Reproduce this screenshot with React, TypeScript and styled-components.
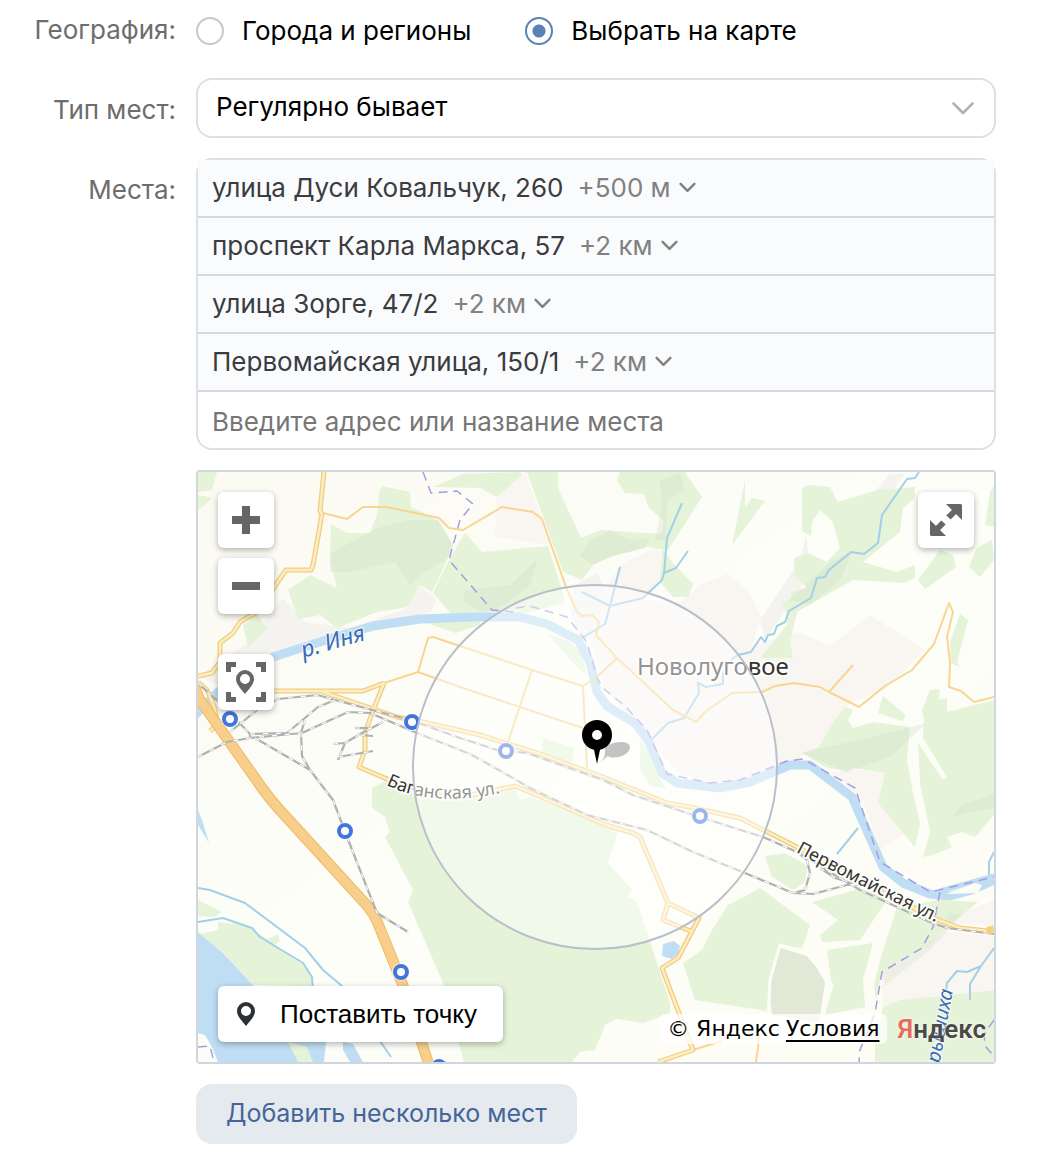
import React, { useId, useState } from "react";
import styled, { createGlobalStyle, css } from "styled-components";

const UI_FONT = 'Inter, "Liberation Sans", Arial, sans-serif';
const MAP_FONT = '"Noto Sans", "Open Sans", sans-serif';
const BORDER = "#dce1e6";

const GlobalStyle = createGlobalStyle`
  *, *::before, *::after { box-sizing: border-box; }
  body {
    margin: 0;
    background: #fff;
    color: #000;
    font-family: ${UI_FONT};
    font-size: 26px;
    line-height: 32px;
  }
`;

const Form = styled.form`
  display: grid;
  grid-template-columns: 176px minmax(0, 1fr);
  column-gap: 20px;
  padding: 0 50px 12px 0;
`;

const labelStyle = css`
  color: #6d6d6d;
  text-align: right;
`;

const RowLabel = styled.label`
  ${labelStyle}
  padding-top: ${(p: { $top?: number }) => p.$top ?? 16}px;
`;

const RowCaption = styled.span`
  ${labelStyle}
  padding-top: ${(p: { $top?: number }) => p.$top ?? 16}px;
`;

const Control = styled.div`
  min-width: 0;
  margin-bottom: 20px;
`;

const RadioGroup = styled.div`
  display: flex;
  flex-wrap: wrap;
  gap: 0 54px;
  padding: 15px 0 11px;
`;

const RadioLabel = styled.label`
  display: flex;
  align-items: center;
  gap: 18px;
  cursor: pointer;
`;

const Radio = styled.input`
  appearance: none;
  width: 28px;
  height: 28px;
  margin: 0;
  border: 2px solid #c5cad0;
  border-radius: 50%;
  background: #fff;
  cursor: pointer;

  &:checked {
    border-color: #5b82b5;
    background: radial-gradient(circle, #5b82b5 0 6px, #fff 7px);
  }
`;

const SelectBox = styled.div`
  display: grid;
  align-items: center;
  border: 2px solid ${BORDER};
  border-radius: 16px;
  background: #fff;

  > * { grid-area: 1 / 1; }
  > svg {
    justify-self: end;
    margin-right: 20px;
    pointer-events: none;
  }
`;

const Select = styled.select`
  appearance: none;
  width: 100%;
  height: 56px;
  padding: 0 56px 2px 18px;
  border: 0;
  border-radius: 14px;
  background: transparent;
  color: #000;
  font: inherit;
`;

const Places = styled.div`
  border: 2px solid ${BORDER};
  border-radius: 16px;
`;

const PlaceList = styled.ul`
  margin: 0;
  padding: 0;
  list-style: none;
`;

const Place = styled.li`
  display: flex;
  align-items: center;
  gap: 14px;
  height: 58px;
  padding: 0 14px;
  border-bottom: 2px solid #d3d9de;
  background: #fafbfd;
  color: #3a3c40;
`;

const RadiusButton = styled.button`
  display: flex;
  align-items: center;
  gap: 8px;
  padding: 0;
  border: 0;
  background: none;
  color: #818181;
  font: inherit;
  cursor: pointer;
`;

const PlaceInput = styled.input`
  display: block;
  width: 100%;
  height: 56px;
  padding: 2px 14px 0;
  border: 0;
  border-radius: 14px;
  background: transparent;
  color: #000;
  font: inherit;

  &::placeholder { color: #767676; opacity: 1; }
`;

const MapFrame = styled.div`
  position: relative;
  height: 594px;
  border: 2px solid #cfd6de;
  border-radius: 4px;
  overflow: hidden;
  background: #fcfcf6;
`;

const MapCanvas = styled.svg`
  display: block;
  width: 100%;
  height: 100%;
`;

const MapTools = styled.div<{ $side: "left" | "right" }>`
  position: absolute;
  top: 20px;
  ${(p) => p.$side}: 20px;
  display: flex;
  flex-direction: column;
  gap: 10px;
`;

const floating = css`
  border: 0;
  border-radius: 6px;
  background: #fff;
  box-shadow: 0 2px 6px rgba(0, 0, 0, 0.3);
  cursor: pointer;
`;

const MapButton = styled.button<{ $apart?: boolean }>`
  ${floating}
  display: grid;
  place-items: center;
  width: 56px;
  height: 56px;
  margin-top: ${(p) => (p.$apart ? 30 : 0)}px;
  padding: 0;
`;

const PointButton = styled.button`
  ${floating}
  position: absolute;
  left: 20px;
  bottom: 20px;
  display: flex;
  align-items: center;
  gap: 24px;
  height: 56px;
  padding: 0 26px 0 18px;
  color: #000;
  font: 26px/32px "Liberation Sans", Arial, sans-serif;
`;

const MapCredits = styled.div`
  position: absolute;
  right: 8px;
  bottom: 18px;
  display: flex;
  align-items: center;
  gap: 10px;
`;

const Copyright = styled.div`
  display: flex;
  gap: 6px;
  padding: 0 8px;
  border-radius: 6px;
  background: rgba(255, 255, 255, 0.75);
  font: 22px/30px "DejaVu Sans", Verdana, sans-serif;

  a {
    color: #000;
    text-underline-offset: 4px;
    text-decoration-thickness: 2px;
  }
`;

const Logo = styled.a`
  color: #4b4b45;
  font: 600 26px/30px Roboto, sans-serif;
  text-decoration: none;
  text-shadow: 0 0 2px #fff, 0 0 2px #fff;

  span { color: #ea6a5c; }
`;

const AddButton = styled.button`
  height: 60px;
  padding: 0 30px 2px;
  border: 0;
  border-radius: 16px;
  background: #e5eaef;
  color: #45659a;
  font: inherit;
  font-size: 25px;
  cursor: pointer;
`;

const MapLabel = styled.text<{ $water?: boolean; $size: number }>`
  font-family: ${MAP_FONT};
  font-size: ${(p) => p.$size}px;
  font-style: ${(p) => (p.$water ? "italic" : "normal")};
  fill: ${(p) => (p.$water ? "#3a6cb5" : "#333")};
  stroke: rgba(255, 255, 255, 0.85);
  stroke-width: ${(p) => (p.$water ? 2 : 4)}px;
  stroke-linejoin: round;
  paint-order: stroke;
`;

const Chevron = ({ size }: { size: "small" | "large" }) =>
  size === "large" ? (
    <svg width="22" height="14" viewBox="0 0 22 14" fill="none" stroke="#aeb1b5" strokeWidth="2.6" strokeLinecap="round" strokeLinejoin="round" aria-hidden="true">
      <path d="M1.500 2.500 11 12 20.500 2.500" />
    </svg>
  ) : (
    <svg width="17" height="12" viewBox="0 0 17 12" fill="none" stroke="#818181" strokeWidth="2.4" strokeLinecap="round" strokeLinejoin="round" aria-hidden="true">
      <path d="M1.6 1.8 8.5 8.8 15.4 1.8" />
    </svg>
  );

const PinShape = ({ x = 0, y = 0, color }: { x?: number; y?: number; color: string }) => (
  <path
    transform={`translate(${x} ${y})`}
    fill={color}
    fillRule="evenodd"
    d="M9 0a9 9 0 0 1 9 9c0 5-4.500 9.500-9 15C4.500 18.500 0 14 0 9a9 9 0 0 1 9-9Zm0 4a5 5 0 1 0 0 10A5 5 0 0 0 9 4Z"
  />
);

const forests = [
  "198,472 217,472 212,490 198,492",
  "198,495 213,498 198,510",
  "257,615 268,628 248,647 243,625",
  "331,524 347,533 370,533 377,515 379,493 382,486 410,492 411,507 438,520 453,545 448,558 432,592 420,585 408,607 377,612 337,628 320,615 298,619 288,590 310,575 337,588 330,562",
  "465,533 482,552 548,546 563,593 564,603 527,613 493,612 450,613 433,593 448,562",
  "424,622 480,620 480,625 455,633",
  "548,634 570,642 582,655 587,676 572,662",
  "527,472 558,472 558,488 581,538 600,530 660,534 663,530 663,520 648,507 644,494 625,493 617,480 620,472 685,472 690,480 702,497 668,550 647,547 610,557 593,565 582,580 563,572",
  "662,548 673,563 693,584 688,597 673,597 660,582",
  "433,487 463,474 520,472 522,475 497,497 480,488",
  "802,488 808,485 830,487 838,502 877,490 915,487 915,498 903,508 900,532 863,562 897,572 915,565 915,578 903,583 853,580 797,612 790,642 793,658 760,658 787,625 785,608 782,604 791,598 791,592 808,588 795,577 794,558 808,553 827,562 840,548 833,522 820,510 812,522 811,536 802,531",
  "745,480 745,508 752,498 765,501 732,545",
  "990,492 994,485 994,527 985,525",
  "992,540 977,548 969,567 980,577 994,560",
  "918,580 940,550 953,555 956,567 925,589",
  "960,614 968,620 957,662 960,667 951,663 950,642",
  "883,696 906,715 902,721 878,713",
  "922,710 930,690 940,689 939,700 947,698 947,712 994,700 994,815 975,837 962,832 947,837 952,847 933,855 923,857 930,832 920,783 918,743 943,780 947,777 923,738 924,720",
  "845,707 853,710 848,720 853,728 873,722 910,727 907,760 913,793 920,823 915,847 878,803 885,773 853,768 847,772 825,767 802,753 818,747 833,723",
  "543,738 574,748 572,762 541,755",
  "640,740 648,752 655,770 665,788 650,786 640,768",
  "372,788 388,780 420,795 470,797 515,786 520,800 530,797 607,823 618,832 608,863 632,890 628,897 637,902 643,920 670,1003 670,1013 643,1023 617,1019 605,1025 595,1050 580,1052 572,1062 464,1062 443,983 408,902 413,890 385,837 390,832 385,817 372,808",
  "702,950 683,963 695,1000 767,1011 772,1003 768,987 780,945 802,948 810,925 760,888 738,900 728,905 712,930",
  "765,856 785,853 808,866 805,882 793,890 772,877",
  "812,902 855,890 882,893 885,903 870,925 860,940 822,942 820,935 838,920",
  "827,950 873,943 863,980 865,1007 825,1015 832,988",
  "897,907 940,900 978,902 943,930 927,947 890,967 882,972 876,1000 874,985 880,960",
  "875,1043 883,1007 900,1000 940,996 994,990 994,1062 875,1062",
  "198,900 222,912 214,917 198,916",
  "218,922 245,925 257,933 268,939 278,934 280,941 274,945 303,965 312,978 312,986 253,985 223,953 200,934 218,930",
  "288,1042 307,1047 313,1062 298,1062",
];

const shades = [
  "331,553 378,528 407,520 438,520 453,545 448,558 420,575 410,585 395,562 350,572 330,572",
  "465,590 510,585 538,558 530,585 505,605 485,613 463,602",
  "590,540 610,530 630,540 650,538 645,548 610,557 593,565 580,556",
  "660,480 680,473 685,490 668,500 665,540 655,540 662,505",
  "790,600 830,562 852,552 840,580 810,605",
  "802,753 880,735 927,723 890,757 853,770 847,772",
  "950,818 965,803 994,794 994,808 970,812",
  "780,948 810,957 825,982 819,1022 772,1015 770,985",
  "882,972 922,950 943,930 950,912 962,915 930,950 885,985",
];

const settlements = [
  "497,497 525,472 540,515 550,545 495,537",
  "620,565 660,546 662,582 640,600 680,602 700,585 727,574 748,590 761,617 752,645 800,632 830,646 870,615 925,650 885,690 850,703 818,745 790,765 720,785 680,775 650,740 605,690 590,640 600,600",
  "858,770 885,773 880,803 905,833 880,850 862,798 830,772",
  "882,972 922,950 945,932 994,936 994,990 940,996 900,1000 883,1007",
  "965,912 994,900 994,925 955,924",
];

const urban = [
  "198,676 245,645 283,598 305,622 350,628 408,608 420,586 437,600 430,613 375,622 273,655 218,685",
  "760,620 800,560 806,535 810,570 800,590 765,640",
  "575,585 597,573 610,600 600,635 580,640 570,610",
  "850,520 890,474 905,474 885,500 865,530",
];

const minorRoads = [
  "323,513 347,519 363,507 387,507 439,518 449,528 463,530 502,507 533,512 542,519 566,587 577,612 582,616 592,615 599,622 596,635 617,658 673,710 696,722 705,712 732,693 762,692 775,686 794,683 820,687 829,692 859,707 885,686 912,670 934,644 949,603 953,612 947,637 950,662 949,687 961,691 974,702 994,697",
  "829,692 853,665",
  "617,658 598,676 583,686 587,768",
  "583,686 532,670 433,637 428,638 418,672 384,683",
  "418,672 460,687 583,728",
  "532,670 508,742",
  "693,1050 722,1041",
  "760,1033 756,1062",
];

const roads = [
  "324,472 320,511 322,514 313,565 311,570 286,570 257,612 240,622 233,633 220,643 220,662 212,673 198,676",
  "384,683 363,691 260,691",
  "323,692 397,717 423,722 480,735 540,754 603,777 667,803 690,807 740,818 797,847 860,880 933,918 960,928 988,931 994,927",
  "384,683 372,713 365,733 365,750 359,767 387,779 430,793 470,795 515,786 560,805 603,824 633,833 640,837 668,903 699,918 678,958 662,968 693,1050 658,1062",
  "668,903 663,920 693,932",
  "198,682 207,690 214,706 218,724 210,731",
];

const railways = [
  "198,757 227,742 250,738 302,733 348,712 370,713 417,733 470,754 490,765 530,788 587,815 647,830 693,852 740,871 793,893 813,894 847,885 863,884",
  "252,712 278,699 318,695 335,700 410,720 460,738 497,750 527,753 603,780 633,795 687,813 763,837 797,852 860,890 930,922 947,928 994,934",
  "250,734 287,733 318,707 335,700",
  "305,720 301,733 302,756 310,770 333,800 347,837 377,913 408,932",
  "255,738 310,770",
  "198,683 225,708 250,734 250,738",
  "230,732 257,710",
  "797,852 807,860 810,873 805,890 793,893",
  "820,868 835,878 855,884",
  "383,722 362,733 345,743 338,760",
  "333,744 345,743",
  "338,757 373,751",
  "355,728 372,728",
  "360,735 373,736",
];

const streams = [
  "919,472 915,478 907,479 882,515 878,543 864,554 851,552 829,570 825,577 817,578 811,598 789,611 785,622 777,626 774,634 768,635 765,642 761,637 751,652 738,655 733,658 723,673 723,684 706,687 698,683 699,693 684,718 668,723 651,740",
  "682,503 667,538 664,573 662,580 643,598 610,606 582,592",
  "688,551 676,568 664,573",
  "620,567 610,606 605,624 582,638",
  "198,888 210,890 245,903 305,948 323,970 342,986 391,1057",
  "198,922 223,918 252,928 260,937 303,963 312,977 313,990",
  "837,854 858,828",
  "994,948 981,966 967,972 957,971 947,983 946,992",
  "981,966 970,984 970,1000",
  "994,852 989,862 989,875",
];

const borders = [
  "423,472 431,493 457,491 473,504 460,520 449,560 492,610 515,612 515,608 530,606 567,617 587,642 597,678 603,688 625,706 647,730 667,774 710,783 740,780 787,761 803,759 855,788 880,862 930,892 994,877",
  "940,892 933,927 922,948 882,972 875,1013 860,1050 859,1062",
  "198,1047 210,1046 214,1062",
  "994,1020 984,1034 985,1046 994,1056",
];

const river =
  "M194 716 218 692 273 657 323 641 373 626 420 619 470 617 520 617 547 624 578 640 590 662 597 692 607 706 636 724 648 740 662 773 677 783 720 788 750 782 790 765 810 765 852 797 883 867 903 883 930 894 950 896 972 890 994 880";

const stations: [number, number][] = [
  [230, 719], [412, 722], [506, 751], [345, 831], [700, 816], [401, 972], [439, 1067],
];

const Lines = ({ items, color, width, dash }: { items: string[]; color: string; width: number; dash?: string }) => (
  <g fill="none" stroke={color} strokeWidth={width} strokeDasharray={dash} strokeLinejoin="round">
    {items.map((points) => <polyline key={points} points={points} />)}
  </g>
);

const Areas = ({ items, color, opacity = 1 }: { items: string[]; color: string; opacity?: number }) => (
  <g fill={color} opacity={opacity}>
    {items.map((points) => <polygon key={points} points={points} />)}
  </g>
);

const TownMap = () => (
  <MapCanvas viewBox="198 472 796 590" preserveAspectRatio="xMidYMid slice" role="img" aria-label="Карта">
    <defs>
      <path id="inya" d="M304 658 Q335 648 395 632" />
      <path id="baganskaya" d="M386 785 Q440 811 520 788" />
      <path id="pervomayskaya" d="M796 852 Q860 886 950 929" />
      <path id="baryshikha" d="M928 1120 L941 1056 L953 990" />
      <linearGradient id="field" x1="0" y1="0" x2="1" y2="1">
        <stop offset="0" stopColor="#fbfaf3" />
        <stop offset="0.5" stopColor="#fdfef8" />
        <stop offset="1" stopColor="#fdfcf5" />
      </linearGradient>
    </defs>
    <rect x="198" y="472" width="796" height="590" fill="url(#field)" />
    <polygon points="198,810 202,820 209,843 198,825" fill="#bfdef4" />
    <Areas items={urban} color="#f4f3ef" />
    <Areas items={settlements} color="#f9f6f1" />
    <polygon fill="#bfdef4" points="198,932 223,953 253,985 288,1042 345,1042 343,1062 198,1062" />
    <polygon fill="#fdfdf8" points="198,1033 205,1035 212,1047 218,1062 198,1062" />
    <polygon fill="#bfdef4" points="325,1042 326,1055 332,1062 344,1062 343,1042" />
    <polygon fill="#fdfdf8" points="326,1042 343,1042 344,1047 355,1062 324,1062" />
    <polygon fill="#bfdef4" points="343,1042 353,1044 363,1062 350,1062 343,1050" />
    <Areas items={forests} color="#e5f3d9" />
    <Areas items={shades} color="#d5decb" opacity={0.32} />
    <polygon points="780,948 810,957 825,982 819,1022 772,1015 770,985" fill="#e1e8d6" />
    <polyline fill="none" stroke="#fcfdf6" strokeWidth="3" points="768,1020 770,980 780,945 805,952 825,975 832,985 822,1018" />
    <polygon fill="#bfdef4" points="663,944 674,941 680,946 678,954 672,959 662,956" />
    <Lines items={streams} color="#a4cfe8" width={2} />
    <path d={river} fill="none" stroke="#bfdef4" strokeWidth="9" strokeLinejoin="round" />
    <path d="M940 891 994 876" fill="none" stroke="#bfdef4" strokeWidth="5" />
    <path d="M946 894 975 883 982 885 978 893Z" fill="#fcfdf6" />
    <Lines items={borders} color="#a79ce4" width={1.500} dash="9 6" />
    <Lines items={minorRoads} color="#f8d592" width={2} />
    <Lines items={roads} color="#f0cd80" width={5} />
    <Lines items={roads} color="#fdeec2" width={2.400} />
    <path d="M190 677 200 700 262 788 Q270 799 278 808 L362 900 Q374 912 379 926 L402 983 430 1068" fill="none" stroke="#eeb964" strokeWidth="11" />
    <path d="M190 677 200 700 262 788 Q270 799 278 808 L362 900 Q374 912 379 926 L402 983 430 1068" fill="none" stroke="#f8cf8a" strokeWidth="9" />
    <Lines items={railways} color="#b0b0b0" width={2.200} />
    <Lines items={railways} color="#fff" width={1.200} dash="5 8" />
    <circle cx="990" cy="930" r="4" fill="#f8d080" />
    {stations.map(([cx, cy]) => (
      <g key={cx}>
        <circle cx={cx} cy={cy} r="9" fill="#fff" opacity="0.7" />
        <circle cx={cx} cy={cy} r="6" fill="#fff" stroke="#4376dc" strokeWidth="4" />
      </g>
    ))}
    <MapLabel $size={23} $water><textPath href="#inya">р. Иня</textPath></MapLabel>
    <MapLabel $size={18}><textPath href="#baganskaya">Баганская ул.</textPath></MapLabel>
    <MapLabel $size={18}><textPath href="#pervomayskaya">Первомайская ул.</textPath></MapLabel>
    <MapLabel $size={20} $water textAnchor="end"><textPath href="#baryshikha" startOffset="100%">Барышиха</textPath></MapLabel>
    <MapLabel $size={24} x="637" y="675">Новолуговое</MapLabel>
    <circle cx="595" cy="767" r="182" fill="#fff" fillOpacity="0.48" stroke="#b9bfca" strokeWidth="2" />
    <path d="M598 764 Q606 758 605 751 C603 742 630 738 630 747 C630 756 613 760 608 756Z" fill="#bdbdbd" opacity="0.9" />
    <path fillRule="evenodd" d="M597 720a15 15 0 0 1 3 29.700L597 764l-3-14.300A15 15 0 0 1 597 720Zm0 10a5 5 0 1 0 0 10 5 5 0 0 0 0-10Z" />
  </MapCanvas>
);

const places = [
  { address: "улица Дуси Ковальчук, 260", radius: "+500 м" },
  { address: "проспект Карла Маркса, 57", radius: "+2 км" },
  { address: "улица Зорге, 47/2", radius: "+2 км" },
  { address: "Первомайская улица, 150/1", radius: "+2 км" },
];

export default function App() {
  const id = useId();
  const [mode, setMode] = useState("map");

  return (
    <>
      <GlobalStyle />
      <Form onSubmit={(e) => e.preventDefault()}>
        <RowCaption id={`${id}geo`} $top={14}>География:</RowCaption>
        <Control>
          <RadioGroup role="radiogroup" aria-labelledby={`${id}geo`}>
            <RadioLabel>
              <Radio type="radio" name="geo" checked={mode === "cities"} onChange={() => setMode("cities")} />
              Города и регионы
            </RadioLabel>
            <RadioLabel>
              <Radio type="radio" name="geo" checked={mode === "map"} onChange={() => setMode("map")} />
              Выбрать на карте
            </RadioLabel>
          </RadioGroup>
        </Control>

        <RowLabel htmlFor={`${id}type`}>Тип мест:</RowLabel>
        <Control>
          <SelectBox>
            <Select id={`${id}type`}>
              <option>Регулярно бывает</option>
            </Select>
            <Chevron size="large" />
          </SelectBox>
        </Control>

        <RowLabel htmlFor={`${id}place`}>Места:</RowLabel>
        <Control>
          <Places>
            <PlaceList>
              {places.map((place) => (
                <Place key={place.address}>
                  <span>{place.address}</span>
                  <RadiusButton type="button" aria-haspopup="listbox">
                    {place.radius}
                    <Chevron size="small" />
                  </RadiusButton>
                </Place>
              ))}
            </PlaceList>
            <PlaceInput id={`${id}place`} type="text" placeholder="Введите адрес или название места" />
          </Places>
        </Control>

        <span />
        <Control>
          <MapFrame>
            <TownMap />
            <MapTools $side="left">
              <MapButton type="button" aria-label="Приблизить">
                <svg width="28" height="28" fill="#666"><path d="M10 0h8v10h10v8H18v10h-8V18H0v-8h10z" /></svg>
              </MapButton>
              <MapButton type="button" aria-label="Отдалить">
                <svg width="28" height="8" fill="#666"><path d="M0 0h28v8H0z" /></svg>
              </MapButton>
              <MapButton type="button" aria-label="Показать все точки" $apart>
                <svg width="40" height="40">
                  <path d="M2.500 10V2.500H10M30 2.500h7.500V10M37.500 30v7.500H30M10 37.500H2.500V30" fill="none" stroke="#666" strokeWidth="5" />
                  <PinShape x={10} y={8} color="#666" />
                </svg>
              </MapButton>
            </MapTools>
            <MapTools $side="right">
              <MapButton type="button" aria-label="Развернуть карту">
                <svg width="32" height="32" fill="#666" stroke="#666">
                  <path stroke="none" d="M16 0h15l1 1v15zM0 16v15l1 1h15z" />
                  <path strokeWidth="6" d="M26 6 18.500 13.500M6 26l7.500-7.500" />
                </svg>
              </MapButton>
            </MapTools>
            <PointButton type="button">
              <svg width="20" height="24" aria-hidden="true"><PinShape x={1} color="#2d3136" /></svg>
              Поставить точку
            </PointButton>
            <MapCredits>
              <Copyright>
                <span>© Яндекс</span>
                <a href="#terms">Условия</a>
              </Copyright>
              <Logo href="#yandex"><span>Я</span>ндекс</Logo>
            </MapCredits>
          </MapFrame>
        </Control>

        <span />
        <div>
          <AddButton type="button">Добавить несколько мест</AddButton>
        </div>
      </Form>
    </>
  );
}
